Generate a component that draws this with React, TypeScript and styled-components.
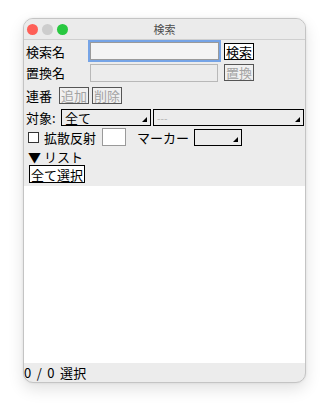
import React from "react";
import styled, { createGlobalStyle } from "styled-components";

const Global = createGlobalStyle`
  html, body {
    margin: 0;
    padding: 0;
    background: #ffffff;
  }
  body {
    font-family: "Noto Sans CJK JP", "Liberation Sans", sans-serif;
    font-size: 13px;
    color: #000;
  }
`;

const Desk = styled.div`
  width: 329px;
  height: 410px;
  padding: 18px 0 0 23px;
  box-sizing: border-box;
`;

const Window = styled.div`
  width: 283px;
  height: 365px;
  box-sizing: border-box;
  border: 1px solid #c4c4c4;
  border-radius: 10px;
  background: #ececec;
  box-shadow: 0 6px 16px rgba(0, 0, 0, 0.12), 0 0 3px rgba(0, 0, 0, 0.08);
  overflow: hidden;
  display: flex;
  flex-direction: column;
`;

const TitleBar = styled.div`
  height: 20px;
  flex: none;
  border-bottom: 1px solid #cfcfcf;
  background: #ebebeb;
  display: flex;
  align-items: center;
  position: relative;
  padding-left: 3px;
  gap: 4px;
`;

const Light = styled.span<{ $c: string }>`
  width: 11px;
  height: 11px;
  border-radius: 50%;
  background: ${({ $c }) => $c};
  flex: none;
`;

const Title = styled.div`
  position: absolute;
  left: 0;
  right: 0;
  top: 0;
  bottom: 0;
  display: flex;
  align-items: center;
  justify-content: center;
  font-size: 11px;
  color: #4d4d4d;
  pointer-events: none;
`;

const Form = styled.div`
  flex: none;
  padding: 1px 0 1px 2px;
  display: flex;
  flex-direction: column;
`;

const Row = styled.div<{ $h: number; $mt?: number }>`
  height: ${({ $h }) => $h}px;
  margin-top: ${({ $mt }) => $mt ?? 0}px;
  display: flex;
  align-items: center;
  white-space: nowrap;
  line-height: 1;
`;

const Label = styled.span<{ $w?: number }>`
  width: ${({ $w }) => ($w ? `${$w}px` : "auto")};
  flex: none;
  font-size: 13px;
`;

const TextInput = styled.div<{ $focus?: boolean; $disabled?: boolean; $w: number }>`
  width: ${({ $w }) => $w}px;
  height: 18px;
  box-sizing: border-box;
  background: ${({ $disabled, $focus }) =>
    $disabled ? "#ececec" : $focus ? "#f4f4f4" : "#ffffff"};
  border: 1px solid ${({ $disabled }) => ($disabled ? "#b8b8b8" : "#9a9a9a")};
  box-shadow: ${({ $focus }) => ($focus ? "0 0 0 2px #76a4e6" : "none")};
  flex: none;
`;

const Button = styled.div<{ $disabled?: boolean }>`
  height: 17px;
  box-sizing: border-box;
  border: 1px solid ${({ $disabled }) => ($disabled ? "#555" : "#000")};
  background: ${({ $disabled }) => ($disabled ? "#f0f0f0" : "#ffffff")};
  color: ${({ $disabled }) => ($disabled ? "#a3a3a3" : "#000")};
  padding: 0 1px;
  display: flex;
  align-items: center;
  font-size: 13px;
  flex: none;
`;

const Select = styled.div<{ $w: number; $muted?: boolean }>`
  width: ${({ $w }) => $w}px;
  height: 17px;
  box-sizing: border-box;
  border: 1px solid #000;
  background: #ececec;
  color: ${({ $muted }) => ($muted ? "#b0b0b0" : "#000")};
  position: relative;
  display: flex;
  align-items: center;
  padding-left: 3px;
  font-size: ${({ $muted }) => ($muted ? "10px" : "13px")};
  flex: none;
  &::after {
    content: "";
    position: absolute;
    right: 3px;
    bottom: 3px;
    width: 0;
    height: 0;
    border-left: 5px solid transparent;
    border-bottom: 5px solid #000;
  }
`;

const Check = styled.span`
  width: 11px;
  height: 11px;
  box-sizing: border-box;
  border: 1px solid #333;
  background: #fff;
  flex: none;
`;

const List = styled.div`
  flex: 1;
  background: #ffffff;
  margin-top: 2px;
`;

const Status = styled.div`
  height: 19px;
  flex: none;
  display: flex;
  align-items: center;
  font-size: 13px;
  word-spacing: 2px;
  letter-spacing: 0.3px;
`;

export default function App() {
  return (
    <>
      <Global />
      <Desk>
        <Window>
          <TitleBar>
            <Light $c="#fe5f57" />
            <Light $c="#cdcdcd" />
            <Light $c="#28c840" />
            <Title>検索</Title>
          </TitleBar>
          <Form>
            <Row $h={18} $mt={1}>
              <Label $w={64}>検索名</Label>
              <TextInput $focus $w={129} />
              <Button style={{ marginLeft: 5 }}>検索</Button>
            </Row>
            <Row $h={19} $mt={3}>
              <Label $w={64}>置換名</Label>
              <TextInput $disabled $w={128} />
              <Button $disabled style={{ marginLeft: 6 }}>置換</Button>
            </Row>
            <Row $h={17} $mt={5}>
              <Label $w={33}>連番</Label>
              <Button $disabled>追加</Button>
              <Button $disabled style={{ marginLeft: 3 }}>削除</Button>
            </Row>
            <Row $h={17} $mt={5}>
              <Label $w={35}>対象:</Label>
              <Select $w={90}>全て</Select>
              <Select $w={151} $muted style={{ marginLeft: 2 }}>
                ---
              </Select>
            </Row>
            <Row $h={18} $mt={2}>
              <Check style={{ marginLeft: 2 }} />
              <Label style={{ marginLeft: 5 }}>拡散反射</Label>
              <TextInput $w={24} style={{ marginLeft: 6 }} />
              <Label style={{ marginLeft: 11 }}>マーカー</Label>
              <Select $w={48} style={{ marginLeft: 5 }} />
            </Row>
            <Row $h={14} $mt={3}>
              <Label style={{ marginLeft: 2 }}>▼ リスト</Label>
            </Row>
            <Row $h={18} $mt={2}>
              <Button style={{ marginLeft: 3, height: 18 }}>全て選択</Button>
            </Row>
          </Form>
          <List />
          <Status>0 / 0 選択</Status>
        </Window>
      </Desk>
    </>
  );
}
